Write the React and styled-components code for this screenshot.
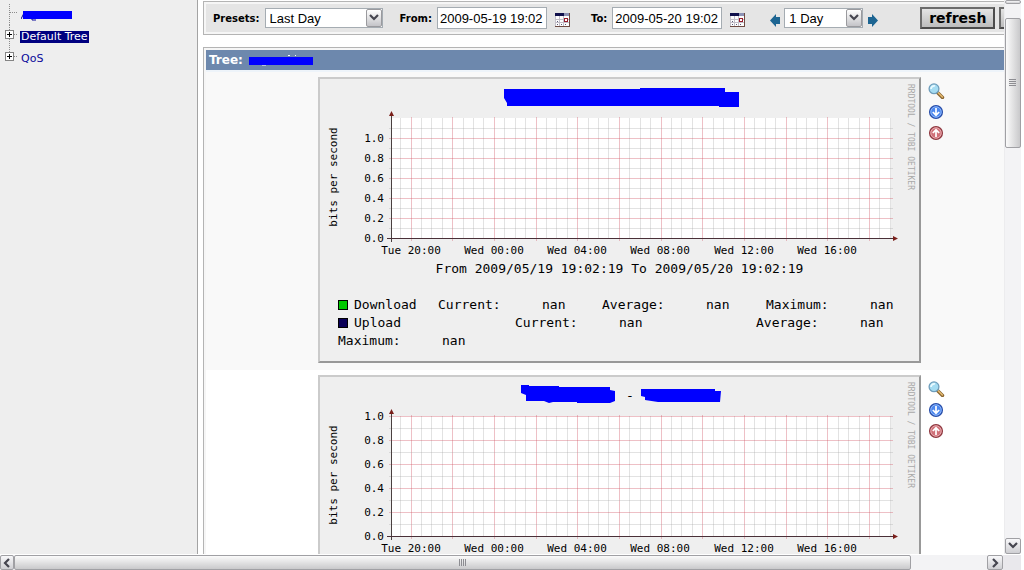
import React, { Fragment } from 'react';
import styled, { createGlobalStyle } from 'styled-components';

const GlobalStyle = createGlobalStyle`
  * {
    box-sizing: border-box;
  }

  body {
    margin: 0;
    background: #ffffff;
    font-family: Verdana, 'DejaVu Sans', sans-serif;
    font-size: 11px;
    overflow: hidden;
  }
`;

const Page = styled.div`
  display: flex;
  flex-direction: column;
  height: 100vh;
  padding-right: 3px;
`;

const Panes = styled.div`
  display: flex;
  flex: 1;
  min-height: 0;
  padding-bottom: 1px;
`;

const Sidebar = styled.nav`
  flex: 0 0 198px;
  background: #eeeeee;
  border-right: 1px solid #a3a3a3;
`;

const TreeList = styled.ul`
  list-style: none;
  margin: 0;
  padding: 3px 0 0;
`;

const TreeItem = styled.li`
  display: flex;
  align-items: center;
  height: 22px;
`;

const TreeLink = styled.a`
  display: flex;
  align-items: center;
  height: 12px;
  margin: 2px 0 0 2px;
  padding: 0 1px;
  line-height: 12px;
  text-decoration: none;
  color: ${props => (props.$selected ? '#ffffff' : '#0a0a9a')};
  background: ${props => (props.$selected ? '#000080' : 'transparent')};
`;

const Main = styled.main`
  flex: 1;
  min-width: 0;
  overflow: hidden;
  padding: 1px 0 0 5px;
`;

const Frame = styled.div`
  border: 1px solid #b4b4b4;
  border-right: 0;
  padding: 2px 0 2px 2px;
  background: #f6f6f6;
  overflow: hidden;
`;

const FilterForm = styled.form`
  display: flex;
  align-items: center;
  height: 28px;
  padding-left: 7px;
  background: #e5e5e5;
  white-space: nowrap;
`;

const Label = styled.label`
  margin-right: 5px;
  font-size: 10px;
  font-weight: bold;
`;

const Field = styled.div`
  display: flex;
  flex: none;
  align-items: center;
  margin-right: ${props => props.$gap}px;
`;

const DateInput = styled.input`
  width: 110px;
  height: 22px;
  margin-right: 8px;
  padding: 0 2px;
  border: 1px solid #a5acb2;
  background: #ffffff;
  font: 13px Tahoma, 'Liberation Sans', sans-serif;
`;

const SelectWrap = styled.div`
  position: relative;
  width: ${props => props.$width}px;
`;

const Select = styled.select`
  display: block;
  width: 100%;
  height: 20px;
  padding: 0 4px;
  border: 1px solid #a5acb2;
  border-radius: 0;
  background: #ffffff;
  appearance: none;
  color: #000000;
  font: 13px Tahoma, 'Liberation Sans', sans-serif;
`;

const SelectArrow = styled.span`
  position: absolute;
  top: 1px;
  right: 1px;
  bottom: 1px;
  display: flex;
  align-items: center;
  justify-content: center;
  width: 16px;
  border: 1px solid #9a9a9e;
  border-radius: 2px;
  background: linear-gradient(#ffffff, #c4c4c8);
  pointer-events: none;
`;

const IconButton = styled.button`
  display: flex;
  padding: 0;
  border: 0;
  background: none;
`;

const FormIconButton = styled(IconButton)`
  padding-top: 4px;
`;

const FormButton = styled.button`
  flex: none;
  width: 75px;
  height: 22px;
  margin-right: 4px;
  padding: 0;
  border: 2px solid;
  border-color: #6c6c6c #4c4c4c #4c4c4c #6c6c6c;
  background: linear-gradient(#e4e4e4, #bdbdbd);
  color: #000000;
  font: bold 14px Verdana, 'DejaVu Sans', sans-serif;
  line-height: 16px;
`;

const TreeFrame = styled(Frame)`
  margin-top: 12px;
`;

const TreeHeader = styled.h1`
  display: flex;
  align-items: center;
  gap: 6px;
  height: 20px;
  margin: 0;
  padding: 0 3px;
  background: #6d88ad;
  color: #ffffff;
  font-size: 12px;
  font-weight: bold;
`;

const GraphRow = styled.section`
  display: flex;
  align-items: flex-start;
  padding: 5px 0 7px 112px;
  background: ${props => (props.$alt ? '#ffffff' : '#f9f9f9')};
`;

const GraphRows = styled.div`
  border-top: 2px solid #eef4fa;
`;

const GraphCard = styled.figure`
  flex: none;
  width: 603px;
  margin: 0;
  padding-bottom: 11px;
  border: 2px solid;
  border-color: #cbcbcb #999999 #999999 #cbcbcb;
  background: #efefef;
  font: 13px/18px 'DejaVu Sans Mono', monospace;
`;

const GraphSvg = styled.svg`
  display: block;
`;

const Caption = styled.figcaption`
  margin-bottom: 18px;
  text-align: center;
`;

const Legend = styled.div`
  padding-left: 18px;
`;

const LegendLine = styled.div`
  display: flex;
  align-items: center;
  height: 18px;
  white-space: pre;
`;

const LegendName = styled.span`
  width: ${props => props.$width}px;
`;

const MetricLabel = styled.span`
  width: 104px;
`;

const MetricValue = styled.span`
  width: ${props => props.$width}px;

  &:last-child {
    width: auto;
  }
`;

const Swatch = styled.span`
  width: 10px;
  height: 10px;
  margin-right: 6px;
  border: 1px solid #000000;
  background: ${props => props.$color};
`;

const Actions = styled.div`
  display: flex;
  flex-direction: column;
  gap: 5px;
  padding: 6px 7px;
`;

const Track = styled.div`
  display: flex;
  flex: none;
  background: #f3f3f5;
`;

const VerticalTrack = styled(Track)`
  flex-direction: column;
  width: 17px;
  border-left: 1px solid #ececee;
`;

const HorizontalTrack = styled(Track)`
  height: 15px;
`;

const Thumb = styled.div`
  display: flex;
  flex: ${props => props.$size};
  align-items: center;
  justify-content: center;
  border: 1px solid #a0a0a4;
  border-radius: 2px;
  background: linear-gradient(
    ${props => (props.$vertical ? 'to right' : 'to bottom')},
    #fbfbfb,
    #c9c9cb
  );
`;

const Space = styled.div`
  flex: ${props => props.$size};
`;

const ScrollButton = styled.button`
  display: flex;
  flex: 0 0 ${props => props.$size || 16}px;
  align-items: center;
  justify-content: center;
  padding: 0;
  border: 1px solid #a0a0a4;
  border-radius: 2px;
  background: linear-gradient(#f8f8fa, #cfcfd3);
`;

const Corner = styled.div`
  width: 18px;
  background: #e9e8ec;
`;

const chevrons = {
  down: 'M1 2 L5 6 L9 2',
  left: 'M7 1 L3 5 L7 9',
  right: 'M3 1 L7 5 L3 9'
};

const Chevron = ({ direction }) => (
  <svg width="10" height="10" viewBox="0 0 10 10">
    <path
      d={chevrons[direction]}
      fill="none"
      stroke="#45454f"
      strokeWidth="2.2"
    />
  </svg>
);

const Grip = ({ vertical }) => (
  <svg width="8" height="8" viewBox="0 0 8 8" shapeRendering="crispEdges">
    {[0, 2, 4, 6].map(n => (
      <rect
        key={n}
        x={vertical ? 0 : n}
        y={vertical ? n : 0}
        width={vertical ? 7 : 1}
        height={vertical ? 1 : 7}
        fill="#8d8d92"
      />
    ))}
  </svg>
);

const Branch = ({ expandable, first, last }) => (
  <svg width="18" height="22" shapeRendering="crispEdges">
    <path
      d={`M9.5 ${first ? 1 : 0} V${last ? 9 : 22} M10 9.5 H18`}
      stroke="#8c8c8c"
      strokeDasharray="1 1"
      fill="none"
    />
    {expandable && (
      <Fragment>
        <rect x="5.5" y="5.5" width="8" height="8" fill="#fff" stroke="#848484" />
        <path d="M7 9.5 H12 M9.5 7 V12" stroke="#000" />
      </Fragment>
    )}
  </svg>
);

const Calendar = () => (
  <svg width="15" height="14" viewBox="0 0 15 14" shapeRendering="crispEdges">
    <rect width="15" height="14" fill="#fdfdfd" />
    <path
      d="M.5 3 V13.5 M4.5 3 V13 M8.5 3 V13 M0 6.5 H14 M0 9.5 H14"
      stroke="#c3bfc9"
      fill="none"
    />
    <path d="M14.5 0 V14 M0 13.5 H15" stroke="#6d4b43" />
    <rect width="9" height="3" fill="#10104c" />
    <rect x="9" width="5" height="3" fill="#8d93b5" />
    <rect x="9.5" y="5.5" width="3" height="3" fill="#fff" stroke="#981c2c" />
    <path d="M2 11.5 H3 M6 11.5 H7 M2 8.5 H3 M10 11.5 H11" stroke="#5d5d78" />
  </svg>
);

const Arrow = ({ left }) => (
  <svg width="10" height="13" viewBox="0 0 10 13">
    <path
      d={
        left
          ? 'M0 6.5 L6 0 V3 H10 V10 H6 V13 Z'
          : 'M10 6.5 L4 0 V3 H0 V10 H4 V13 Z'
      }
      fill="#1d6592"
    />
  </svg>
);

const Magnifier = () => (
  <svg width="17" height="16" viewBox="0 0 17 16">
    <path d="M9.5 9.5 L14.5 14.5" stroke="#8a6530" strokeWidth="3.4" strokeLinecap="round" />
    <path d="M10.2 9.8 L14.4 14" stroke="#e6bc72" strokeWidth="1.5" strokeLinecap="round" />
    <circle cx="6" cy="5.8" r="4.9" fill="#a5dcf2" stroke="#6f9dbb" strokeWidth="1.3" />
    <path d="M3 6 A3.2 3.2 0 0 1 7 3" stroke="#e9faff" strokeWidth="1.8" fill="none" />
  </svg>
);

const RoundArrow = ({ up }) => (
  <svg width="16" height="16" viewBox="0 0 16 16">
    <circle
      cx="8"
      cy="8"
      r="6.4"
      fill={up ? '#d07078' : '#4b86ee'}
      stroke={up ? '#8f3a42' : '#2b4fa8'}
      strokeWidth="1.3"
    />
    <circle
      cx="8"
      cy="8"
      r="5.2"
      fill="none"
      stroke={up ? '#e9b0b4' : '#93bbf9'}
      strokeWidth="0.9"
    />
    <path
      d={up ? 'M8 12 V5 M4.8 8 L8 4.8 L11.2 8' : 'M8 4 V11 M4.8 8 L8 11.2 L11.2 8'}
      stroke="#fff"
      strokeWidth="1.7"
      fill="none"
    />
  </svg>
);

const times = [
  'Tue 20:00',
  'Wed 00:00',
  'Wed 04:00',
  'Wed 08:00',
  'Wed 12:00',
  'Wed 16:00'
];

const AXIS_X = 71;
const AXIS_Y = 159;
const PLOT_WIDTH = 500;
const PLOT_HEIGHT = 120;
const HALF_HOUR = 10.42;

// vertical lines every half hour, every fourth one is a major line
const columns = Array.from({ length: 48 }, (_, i) => ({
  x: Math.floor(91 + (i - 1) * HALF_HOUR) + 0.5,
  major: (i - 1) % 4 === 0
}));

const Graph = ({ max, children }) => {
  const step = PLOT_HEIGHT / (max * 10);
  const count = Math.min(Math.round(max * 10), 11);
  const lines = Array.from({ length: count }, (_, i) => i + 1);

  return (
    <GraphSvg width="599" height="181" fontFamily="'DejaVu Sans Mono', monospace" fontSize="11">
      <rect x={AXIS_X} y={AXIS_Y - PLOT_HEIGHT} width={PLOT_WIDTH} height={PLOT_HEIGHT} fill="#fff" />
      <g shapeRendering="crispEdges">
        {columns.map(({ x, major }) => (
          <path
            key={x}
            d={`M${x} ${AXIS_Y - PLOT_HEIGHT - (major ? 1 : 0)} V${AXIS_Y + (major ? 3 : 1)}`}
            stroke={major ? '#d05060' : '#a0a0a0'}
            strokeOpacity={major ? 0.36 : 0.3}
          />
        ))}
        {lines.map(n => (
          <path
            key={n}
            d={`M${AXIS_X - 2} ${AXIS_Y - n * step + 0.5} H${AXIS_X + PLOT_WIDTH + 2}`}
            stroke={n % 2 ? '#a0a0a0' : '#d05060'}
            strokeOpacity={n % 2 ? 0.3 : 0.36}
          />
        ))}
        <path d={`M${AXIS_X + 0.5} 36 V${AXIS_Y + 4}`} stroke="#4a4040" />
        <path d={`M${AXIS_X - 4} ${AXIS_Y + 0.5} H${AXIS_X + 504}`} stroke="#4a3038" />
      </g>
      <path d="M71.5 32 L69 37 H74 Z M578 159.5 L573 157 V162 Z" fill="#7a1f1a" />
      {lines
        .filter(n => n % 2 === 0)
        .concat(0)
        .map(n => (
          <text key={n} x="64" y={AXIS_Y - n * step + 4} textAnchor="end">
            {(n / 10).toFixed(1)}
          </text>
        ))}
      {times.map((time, i) => (
        <text key={time} x={Math.floor(91 + i * 83.3)} y="175" textAnchor="middle">
          {time}
        </text>
      ))}
      <text transform="translate(17 98) rotate(-90)" textAnchor="middle">
        bits per second
      </text>
      <text transform="translate(588 5) rotate(90)" fontSize="8" fill="#a9a9a9">
        RRDTOOL / TOBI OETIKER
      </text>
      {children}
    </GraphSvg>
  );
};

const GraphActions = () => (
  <Actions>
    <IconButton type="button" aria-label="Zoom graph">
      <Magnifier />
    </IconButton>
    <IconButton type="button" aria-label="Export data">
      <RoundArrow />
    </IconButton>
    <IconButton type="button" aria-label="Page top">
      <RoundArrow up />
    </IconButton>
  </Actions>
);

const Metric = ({ label, value, width }) => (
  <Fragment>
    <MetricLabel>{label}:</MetricLabel>
    <MetricValue $width={width}>{value}</MetricValue>
  </Fragment>
);

const GraphDetails = () => (
  <Fragment>
    <Caption>From 2009/05/19 19:02:19 To 2009/05/20 19:02:19</Caption>
    <Legend>
      <LegendLine>
        <Swatch $color="#00c800" />
        <LegendName $width={84}>Download</LegendName>
        <Metric label="Current" value="nan" width={60} />
        <Metric label="Average" value="nan" width={60} />
        <Metric label="Maximum" value="nan" />
      </LegendLine>
      <LegendLine>
        <Swatch $color="#0a0058" />
        <LegendName $width={161}>Upload</LegendName>
        <Metric label="Current" value="nan" width={137} />
        <Metric label="Average" value="nan" />
      </LegendLine>
      <LegendLine>
        <Metric label="Maximum" value="nan" />
      </LegendLine>
    </Legend>
  </Fragment>
);

const Dropdown = ({ id, width, value, label }) => (
  <SelectWrap $width={width}>
    <Select id={id} defaultValue={value} aria-label={label}>
      <option>{value}</option>
    </Select>
    <SelectArrow>
      <Chevron direction="down" />
    </SelectArrow>
  </SelectWrap>
);

const Toolbar = () => (
  <Frame>
    <FilterForm onSubmit={e => e.preventDefault()}>
      <Field $gap={17}>
        <Label htmlFor="presets">Presets:</Label>
        <Dropdown id="presets" width={118} value="Last Day" />
      </Field>
      <Field $gap={21}>
        <Label htmlFor="from">From:</Label>
        <DateInput id="from" defaultValue="2009-05-19 19:02" />
        <FormIconButton type="button" aria-label="Start date">
          <Calendar />
        </FormIconButton>
      </Field>
      <Field $gap={25}>
        <Label htmlFor="to">To:</Label>
        <DateInput id="to" defaultValue="2009-05-20 19:02" />
        <FormIconButton type="button" aria-label="End date">
          <Calendar />
        </FormIconButton>
      </Field>
      <Field $gap={4}>
        <FormIconButton type="button" aria-label="Shift back">
          <Arrow left />
        </FormIconButton>
      </Field>
      <Field $gap={5}>
        <Dropdown id="span" width={79} value="1 Day" label="Time span" />
      </Field>
      <Field $gap={42}>
        <FormIconButton type="button" aria-label="Shift forward">
          <Arrow />
        </FormIconButton>
      </Field>
      <FormButton type="submit">refresh</FormButton>
      <FormButton type="reset" aria-label="clear" />
    </FilterForm>
  </Frame>
);

const App = () => (
  <Page>
    <GlobalStyle />
    <Panes>
      <Sidebar>
        <TreeList>
          <TreeItem>
            <Branch first />
            <TreeLink href="#tree" aria-label="Tree">
              <svg width="52" height="12">
                <path d="M0 10 L3 4 L4 10 M11 9 V11 H15" stroke="#0a0a9a" fill="none" />
                <rect x="2" y="2" width="49" height="8" fill="#0000ff" />
              </svg>
            </TreeLink>
          </TreeItem>
          <TreeItem>
            <Branch expandable />
            <TreeLink href="#default" $selected>
              Default Tree
            </TreeLink>
          </TreeItem>
          <TreeItem>
            <Branch expandable last />
            <TreeLink href="#qos">QoS</TreeLink>
          </TreeItem>
        </TreeList>
      </Sidebar>

      <Main>
        <Toolbar />
        <TreeFrame>
          <TreeHeader>
            Tree:
            <svg width="64" height="12">
              <path d="M13 11 H17 L18 9" stroke="#fff" fill="none" />
              <path d="M39 1.5 H41 M46 1.5 H47" stroke="#fff" />
              <rect y="3" width="64" height="8" fill="#0000ff" />
            </svg>
          </TreeHeader>
          <GraphRows>
            <GraphRow>
              <GraphCard>
                <Graph max={1.2}>
                  <path
                    d="M184 10 H320 V9 H405 V13 H419 V28 H399 V27 H187 V24 L184 19 Z"
                    fill="#0000ff"
                  />
                </Graph>
                <GraphDetails />
              </GraphCard>
              <GraphActions />
            </GraphRow>
            <GraphRow $alt>
              <GraphCard>
                <Graph max={1}>
                  <path
                    d="M201 8 H209 V9 H239 V10 H290 V13 L295 14 V24 L290 26 H257 V25 H233 L229 26 L224 24 H206 V18 L201 16 Z"
                    fill="#0000ff"
                  />
                  <text x="306" y="23" fontSize="13">
                    -
                  </text>
                  <path
                    d="M321 12 H395 V14 H401 L400 25 H338 L325 23 V20 L321 19 Z"
                    fill="#0000ff"
                  />
                </Graph>
              </GraphCard>
              <GraphActions />
            </GraphRow>
          </GraphRows>
        </TreeFrame>
      </Main>

      <VerticalTrack>
        <ScrollButton $size={4} aria-label="Scroll up" />
        <Space $size={14} />
        <Thumb $size={128} $vertical>
          <Grip vertical />
        </Thumb>
        <Space $size={391} />
        <ScrollButton aria-label="Scroll down">
          <Chevron direction="down" />
        </ScrollButton>
      </VerticalTrack>
    </Panes>

    <HorizontalTrack>
      <ScrollButton $size={14} aria-label="Scroll left">
        <Chevron direction="left" />
      </ScrollButton>
      <Thumb $size={897}>
        <Grip />
      </Thumb>
      <Space $size={76} />
      <ScrollButton aria-label="Scroll right">
        <Chevron direction="right" />
      </ScrollButton>
      <Corner />
    </HorizontalTrack>
  </Page>
);

export default App;
